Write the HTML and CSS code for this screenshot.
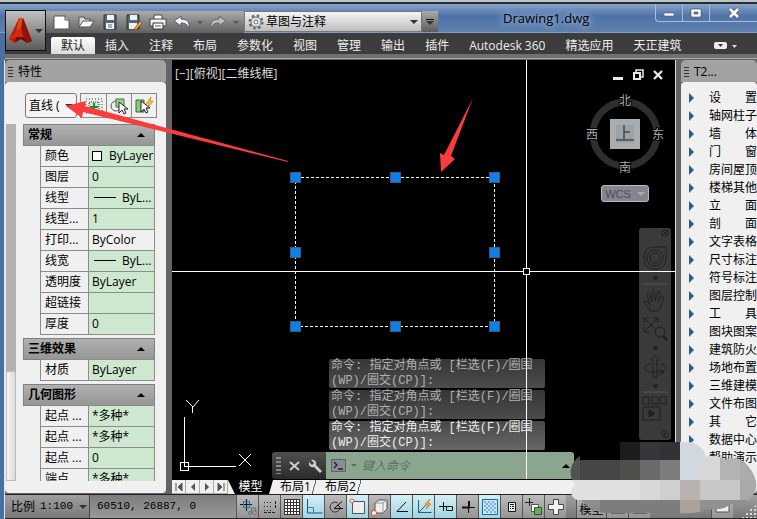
FILE: index.html
```html
<!DOCTYPE html>
<html lang="zh-CN">
<head>
<meta charset="utf-8">
<title>Drawing1.dwg</title>
<link rel="stylesheet" href="styles.css">
</head>
<body>
<div class="app">
  <header class="top">
    <button class="app-btn" aria-label="Application menu">
      <svg width="24" height="28" viewBox="0 0 24 28"><path d="M10 1h4l9 23-5 2-6-4-6 4-6-4z" fill="#b81d0b"/><path d="M10 1h4l2 6-4 6-5 2z" fill="#e5451d"/><path d="M7 14l5-3 3 8-5 3-10 0z" fill="#d8260e"/><path d="M14 1l9 23-5 2-4-8-2-7z" fill="#8d1207"/><path d="M7 20h8l3 6-6-4-6 3z" fill="#6a0e08"/></svg>
      <span class="caret"></span>
    </button>
    <div class="top-col">
      <div class="title-row">
        <div class="qat">
          <button aria-label="New"><svg viewBox="0 0 18 16"><path d="M1 2h11l4 4v9H1z" fill="#fff" stroke="#555"/><path d="M12 2v4h4" fill="#ccc" stroke="#555"/></svg></button>
          <button aria-label="Open"><svg viewBox="0 0 18 16"><path d="M2 13V3h5l1 2h5v3" fill="#d5dde2" stroke="#555"/><path d="M2 13l4-6h11l-4 6z" fill="#f4f6f7" stroke="#555"/></svg></button>
          <button aria-label="Save"><svg viewBox="0 0 18 16"><path d="M3 1h12v14H3z" fill="#536779" stroke="#333"/><path d="M6 1h7v5H6zM5 9h8v6H5z" fill="#eef2f4"/><path d="M7 11h4M7 13h4" stroke="#536779"/></svg></button>
          <button aria-label="Save as"><svg viewBox="0 0 18 16"><path d="M2 1h12v14H2z" fill="#536779" stroke="#333"/><path d="M5 1h7v5H5zM4 9h8v6H4z" fill="#eef2f4"/><path d="M9 15l6-8 2 2-6 7z" fill="#f3a62b" stroke="#6b4310" stroke-width=".6"/></svg></button>
          <button aria-label="Print"><svg viewBox="0 0 18 16"><path d="M5 1h8v5H5z" fill="#fff" stroke="#444"/><path d="M1 5h16v7H1z" fill="#f2f2f2" stroke="#444"/><path d="M4 9h10v6H4z" fill="#fff" stroke="#333"/><path d="M6 12h6" stroke="#555"/></svg></button>
          <button aria-label="Undo"><svg viewBox="0 0 18 16"><path d="M1 7l7-5v3c6 0 9 3 8 9-2-4-4-5-8-5v3z" fill="#f7f7f7" stroke="#4c5a66"/></svg></button>
          <span class="caret caret-dim"></span>
          <button aria-label="Redo"><svg viewBox="0 0 18 16"><path d="M17 7l-7-5v3C4 5 1 8 2 14c2-4 4-5 8-5v3z" fill="#bbb" stroke="#666"/></svg></button>
          <span class="caret caret-dim"></span>
        </div>
        <div class="workspace">
          <svg width="16" height="16" viewBox="0 0 16 16"><circle cx="8" cy="8" r="6.500" fill="none" stroke="#5c6368" stroke-width="2" stroke-dasharray="2.500 2.600"/><circle cx="8" cy="8" r="5" fill="#e8ecee" stroke="#5c6368"/><circle cx="8" cy="8" r="2" fill="#fff" stroke="#5c6368"/></svg>
          <select aria-label="工作空间"><option>草图与注释</option></select>
          <span class="caret"></span>
        </div>
        <button class="qat-more" aria-label="Customize"><i></i><span class="caret"></span></button>
        <h1>Drawing1.dwg</h1>
        <div class="win-btns">
          <button aria-label="Minimize"><svg viewBox="0 0 12 12"><path d="M1 6h10v3H1z" fill="#fff" stroke="#555" stroke-width=".6"/></svg></button>
          <button aria-label="Maximize"><svg viewBox="0 0 12 12"><path d="M1 2h10v8H1zM4 5v2h4V5z" fill="#fff" fill-rule="evenodd" stroke="#444" stroke-width=".6"/></svg></button>
          <button aria-label="Close"><svg viewBox="0 0 12 12"><path d="M2 2l8 8M10 2l-8 8" stroke="#556" stroke-width="4"/><path d="M2 2l8 8M10 2l-8 8" stroke="#fff" stroke-width="2.600"/></svg></button>
        </div>
      </div>
      <nav class="menu">
        <button class="on">默认</button><button>插入</button><button>注释</button><button>布局</button><button>参数化</button><button>视图</button><button>管理</button><button>输出</button><button>插件</button><button>Autodesk 360</button><button>精选应用</button><button>天正建筑</button>
        <button class="ribbon-toggle" aria-label="Ribbon"><svg width="24" height="10" viewBox="0 0 24 10"><rect x="1" y="1" width="13" height="7" rx="2" fill="#eee"/><path d="M5 3h5L7.500 6z" fill="#333"/><path d="M19 4h5l-2.500 3z" fill="#ddd"/></svg></button>
      </nav>
    </div>
  </header>

  <main class="work">
    <aside class="palette props">
      <h2><i class="grip"></i>特性</h2>
      <div class="palette-body">
        <div class="pick">
          <div class="kind"><select aria-label="对象类型"><option>直线 (</option></select><span class="caret"></span></div>
          <div class="pick-btns">
            <button aria-label="PICKADD"><svg viewBox="0 0 22 20"><rect x="3" y="3" width="16" height="14" fill="none" stroke="#333" stroke-dasharray="1 2"/><rect x="6" y="6" width="10" height="9" fill="#cfe9cf" stroke="#333" stroke-dasharray="1 1"/><path d="M11 7v7M7 11h8" stroke="#16902a" stroke-width="2"/></svg></button>
            <button aria-label="选择对象"><svg viewBox="0 0 22 20"><circle cx="8" cy="10" r="5" fill="none" stroke="#555"/><path d="M8 3h8v8H8z" fill="#9ad08f" stroke="#3a7d33"/><path d="M11 6v11l3-3 2 4 2-1-2-4h4z" fill="#fff" stroke="#222"/></svg></button>
            <button aria-label="快速选择"><svg viewBox="0 0 22 20"><path d="M3 4h8v12H3z" fill="#8cc97e" stroke="#2e6e27"/><path d="M18 1l-5 7h3l-2 5 6-8h-3z" fill="#ffc02e" stroke="#c67a08" stroke-width=".6"/><path d="M8 5v11l3-3 2 4 2-1-2-4h4z" fill="#fff" stroke="#222"/></svg></button>
          </div>
        </div>
        <div class="prop-scroll">
          <div class="track"><i></i></div>
          <div class="groups">
            <section><h3>常规<span class="up"></span></h3>
            <table>
              <tr><th>颜色</th><td><i class="swatch"></i>ByLayer</td></tr>
              <tr><th>图层</th><td>0</td></tr>
              <tr><th>线型</th><td><i class="line"></i>ByL...</td></tr>
              <tr><th>线型...</th><td>1</td></tr>
              <tr><th>打印...</th><td class="plain">ByColor</td></tr>
              <tr><th>线宽</th><td><i class="line"></i>ByL...</td></tr>
              <tr><th>透明度</th><td>ByLayer</td></tr>
              <tr><th>超链接</th><td></td></tr>
              <tr><th>厚度</th><td>0</td></tr>
            </table></section>
            <section><h3>三维效果<span class="up"></span></h3>
            <table><tr><th>材质</th><td>ByLayer</td></tr></table></section>
            <section><h3>几何图形<span class="up"></span></h3>
            <table>
              <tr><th>起点 ...</th><td>*多种*</td></tr>
              <tr><th>起点 ...</th><td>*多种*</td></tr>
              <tr><th>起点 ...</th><td>0</td></tr>
              <tr><th>端点 ...</th><td>*多种*</td></tr>
            </table></section>
          </div>
        </div>
      </div>
    </aside>

    <section class="doc">
      <div class="view">
        <span class="view-label">[−][俯视][二维线框]</span>
        <div class="view-btns">
          <button aria-label="Minimize view"><svg viewBox="0 0 12 12"><path d="M1 8h10v3H1z" fill="#e8e8e8"/></svg></button>
          <button aria-label="Restore view"><svg viewBox="0 0 12 12"><path d="M4 3V1h7v7H9" fill="none" stroke="#e8e8e8" stroke-width="1.500"/><path d="M2 4h6v6H2z" fill="none" stroke="#e8e8e8" stroke-width="2"/></svg></button>
          <button aria-label="Close view"><svg viewBox="0 0 12 12"><path d="M2 2l8 8M10 2l-8 8" stroke="#e8e8e8" stroke-width="2.400"/></svg></button>
        </div>
        <svg class="cube" width="82" height="84" viewBox="0 0 82 84">
          <circle cx="41" cy="43" r="32" fill="none" stroke="#2e2e2e" stroke-width="7"/>
          <rect x="26" y="28" width="30" height="30" fill="#a9adb0"/><rect x="32" y="34" width="18" height="18" fill="#9ba3a8"/>
          <path d="M40 34v15M40 41h6M32 49h18" stroke="#434a50" stroke-width="1.500" fill="none"/>
          <g fill="#aaa" stroke="#000" stroke-width="2" paint-order="stroke" font-size="12" text-anchor="middle"><text x="41" y="14">北</text><text x="8" y="48">西</text><text x="74" y="48">东</text><text x="41" y="81">南</text></g>
        </svg>
        <button class="wcs">WCS<span class="caret"></span></button>
        <div class="navbar">
          <svg width="32" height="212" viewBox="0 0 32 212" fill="none" stroke="#202020">
            <circle cx="26" cy="5" r="3.500"/><path d="M24 3l4 4M28 3l-4 4"/>
            <path d="M5 30C5 22 9 19 16 19h11v11c0 7-4 11-11 11S5 37 5 30z"/><circle cx="16" cy="30" r="8"/><circle cx="16" cy="30" r="5"/>
            <path d="M14 49h5l-2.500 3z" fill="#202020"/><path d="M4 56h24" stroke="#555"/>
            <path d="M11 83c-1-4-4-6-6-9 2-2 3 0 6 3l-3-11c2-2 3 0 5 8l0-12c2-2 3 0 3 11l3-10c2-1 3 1 0 11l4-6c3 0 1 4-1 9-1 4-3 6-4 6z"/>
            <path d="M5 90l15 15M19 90L5 104M5 95v-5h5M14 90h5v5M5 99v5h5"/><circle cx="21" cy="104" r="5" fill="#3a3a3a"/><path d="M24 108l4 4" stroke-width="3"/>
            <path d="M14 119h5l-2.500 3z" fill="#202020"/>
            <path d="M16 127l4 5h-2v17h-4v-17h-2z"/><path d="M12 136c-9 1-9 7 0 8h8c9-1 9-7 2-8M20 141l5 3-5 3"/>
            <path d="M14 157h5l-2.500 3z" fill="#202020"/><path d="M4 164h24" stroke="#555"/>
            <path d="M4 169h6v7H4zM13 169h6v7h-6zM21 169h6v7h-6zM4 179h17v13H4z"/><path d="M10 182l6 3.500-6 3.500z" fill="#202020"/>
            <circle cx="26" cy="206" r="3.500"/><circle cx="26" cy="206" r="1"/>
          </svg>
        </div>
        <form class="command">
          <div class="cmd-tools"><i class="grip"></i><button type="button" aria-label="Close"><svg viewBox="0 0 14 14"><path d="M2 3l9 8M11 3l-9 8" stroke="#ccc" stroke-width="2"/></svg></button><button type="button" aria-label="Settings"><svg viewBox="0 0 14 14"><path d="M2 1l3 3-2 2-3-3c-1 4 2 6 5 5l6 6 2-2-6-6c1-4-2-6-5-5z" fill="#ccc"/></svg></button></div>
          <div class="cmd-entry"><svg width="15" height="13" viewBox="0 0 15 13"><rect x=".5" y=".5" width="14" height="12" fill="#8c8c95" stroke="#62626b"/><path d="M3 3l3 3-3 3M7 10h5" stroke="#222" fill="none" stroke-width="1.300"/></svg><span class="caret"></span><input aria-label="命令" placeholder="键入命令"><span class="up"></span></div>
        </form>
        <ol class="history">
          <li>命令: 指定对角点或 [栏选(F)/圈围<br>(WP)/圈交(CP)]:</li>
          <li>命令: 指定对角点或 [栏选(F)/圈围<br>(WP)/圈交(CP)]:</li>
          <li>命令: 指定对角点或 [栏选(F)/圈围<br>(WP)/圈交(CP)]:</li>
        </ol>
        <svg class="drawing" fill="none" stroke="#fff" shape-rendering="crispEdges">
          <path d="M0 211.500h351M358 211.500h146M354.500 0v208M354.500 215v204"/><rect x="351.500" y="208.500" width="6" height="6"/>
          <rect x="123.500" y="117.500" width="199" height="149" stroke-dasharray="3 2"/>
          <path d="M12.500 357v49h51M8.500 402.500h8v8h-8z"/>
          <path d="M14 340l7 7 6-7M20.500 347v6M67 394l12 12M79 394l-12 12" shape-rendering="auto"/>
          <g fill="#0c80e8" stroke="#3c5a80"><path d="M118.500 112.500h10v10h-10zM218.500 112.500h10v10h-10zM317.500 112.500h10v10h-10zM118.500 187.500h10v10h-10zM317.500 187.500h10v10h-10zM118.500 261.500h10v10h-10zM218.500 261.500h10v10h-10zM317.500 261.500h10v10h-10z"/></g>
        </svg>
      </div>
      <div class="sheets">
        <button class="step" aria-label="First"><svg viewBox="0 0 10 10"><path d="M2 1v8M8 1L4 5l4 4z" fill="#555" stroke="#555"/></svg></button><button class="step" aria-label="Previous"><svg viewBox="0 0 10 10"><path d="M7 1L3 5l4 4z" fill="#555"/></svg></button><button class="step" aria-label="Next"><svg viewBox="0 0 10 10"><path d="M3 1l4 4-4 4z" fill="#555"/></svg></button><button class="step" aria-label="Last"><svg viewBox="0 0 10 10"><path d="M8 1v8M2 1l4 4-4 4z" fill="#555" stroke="#555"/></svg></button>
        <button class="sheet on">模型</button><button class="sheet">布局1</button><button class="sheet">布局2</button>
      </div>
    </section>

    <aside class="palette tarch">
      <h2><i class="grip"></i>T2...</h2>
      <ul class="palette-body">
        <li>设　　置</li><li>轴网柱子</li><li>墙　　体</li><li>门　　窗</li><li>房间屋顶</li><li>楼梯其他</li><li>立　　面</li><li>剖　　面</li><li>文字表格</li><li>尺寸标注</li><li>符号标注</li><li>图层控制</li><li>工　　具</li><li>图块图案</li><li>建筑防火</li><li>场地布置</li><li>三维建模</li><li>文件布图</li><li>其　　它</li><li>数据中心</li><li>帮助演示</li>
      </ul>
    </aside>
  </main>

  <footer class="status">
    <div class="scale"><label for="scale">比例</label><select id="scale"><option>1:100</option></select><span class="caret"></span></div>
    <output class="coords">60510, 26887, 0</output>
    <div class="toggles">
      <button aria-label="推断约束"><svg viewBox="0 0 20 20"><path d="M2 7.500h12M8.500 2v12" stroke="#111"/><path d="M5.500 4.500h6v6h-6z" fill="none" stroke="#2b6ba0"/><path d="M13.500 16v-5h4v4" stroke="#357dbb" fill="none"/><circle cx="12" cy="16" r="1.500" stroke="#357dbb" fill="none"/><circle cx="16.500" cy="15.500" r="2" stroke="#d2542c" fill="none"/></svg></button>
      <button aria-label="捕捉"><svg viewBox="0 0 20 20"><path d="M4 5.500h9M4 9.500h9M4 13.500h9" stroke="#222" stroke-dasharray="1 2"/><path d="M15.500 4v8M4 15.500h12" stroke="#222" stroke-dasharray="3 1"/></svg></button>
      <button aria-label="栅格"><svg viewBox="0 0 20 20"><path d="M2 2h16v16H2z" fill="#fff"/><path d="M2.500 2v16M5.500 2v16M8.500 2v16M11.500 2v16M14.500 2v16M17.500 2v16M2 2.500h16M2 5.500h16M2 8.500h16M2 11.500h16M2 14.500h16M2 17.500h16" stroke="#333"/></svg></button>
      <button class="on" aria-label="正交"><svg viewBox="0 0 20 20"><path d="M3.500 2v14h15" fill="none" stroke="#135b7e"/><path d="M3 10.500h6.500V16" fill="none" stroke="#397e9b"/></svg></button>
      <button aria-label="极轴"><svg viewBox="0 0 20 20"><path d="M12 6a5 5 0 1 0 2 5" fill="none" stroke="#333"/><path d="M8 11.500l8-7M8 11.500h9M12 8l3 3.500" fill="none" stroke="#111"/></svg></button>
      <button class="on" aria-label="对象捕捉"><svg viewBox="0 0 20 20"><path d="M4.500 4.500h12v12h-12z" fill="#eee" stroke="#555"/><circle cx="4" cy="4" r="2" fill="#fff" stroke="#c95b32"/></svg></button>
      <button aria-label="三维对象捕捉"><svg viewBox="0 0 20 20"><path d="M5 6l4-3h8v9l-4 4H5z" fill="#eee" stroke="#555"/><path d="M5 6h8v10M13 6l4-3" fill="none" stroke="#999"/><circle cx="4" cy="16" r="2.500" fill="#fff" stroke="#d35426"/></svg></button>
      <button class="on" aria-label="对象追踪"><svg viewBox="0 0 20 20"><path d="M14 5L5 14.500h11" fill="none" stroke="#111"/></svg></button>
      <button class="on" aria-label="动态 UCS"><svg viewBox="0 0 20 20"><path d="M4.500 3v12.500h13M4 16l8-8" fill="none" stroke="#315d72"/><path d="M16 2l-5 5 3 1-2 4 5-5-3-1z" fill="#ffad22" stroke="#b35a0b" stroke-width=".5"/></svg></button>
      <button class="on" aria-label="动态输入"><svg viewBox="0 0 20 20"><path d="M3 9.500h13M7.500 5v9M10.500 9.500h6v4h-6z" fill="none" stroke="#111"/></svg></button>
      <button aria-label="线宽"><svg viewBox="0 0 20 20"><path d="M11 10.500h6M10.500 10v6" stroke="#111"/><path d="M11 4v7M4 10.500h8" stroke="#111" stroke-width="2"/></svg></button>
      <button class="on" aria-label="透明度"><svg viewBox="0 0 20 20"><path d="M2.500 2.500h15v15h-15z" fill="#cde5f6" stroke="#1769a8"/><path d="M4 5h12M4 9h12M4 13h12" stroke="#7ab0dc" stroke-width="2" stroke-dasharray="2 2"/><path d="M6 7h10M6 11h10M6 15h10" stroke="#7ab0dc" stroke-width="2" stroke-dasharray="2 2"/></svg></button>
      <button aria-label="快捷特性"><svg viewBox="0 0 20 20"><path d="M6.500 5.500h7v9h-7z" fill="#eee" stroke="#111"/><path d="M8 7.500h4M8 9.500h1M10 9.500h2M8 11.500h1M10 11.500h2" stroke="#111"/></svg></button>
      <button aria-label="选择循环"><svg viewBox="0 0 20 20"><path d="M1 5.500h8M5.500 1v8" stroke="#222"/><path d="M7.500 7.500h7v7h-7z" fill="#fff" stroke="#555"/><path d="M10.500 10.500h7v7h-7z" fill="#6aa95b" stroke="#2a5a22"/></svg></button>
      <button aria-label="注释监视器"><svg viewBox="0 0 20 20"><path d="M7.500 2.500h5v5h5v5h-5v5h-5v-5h-5v-5h5z" fill="#f3f3f3" stroke="#445"/></svg></button>
    </div>
    <div class="space"><button>模型</button><button aria-label="快速查看布局"><svg viewBox="0 0 20 20"><path d="M3 4h14v12H3z" fill="#ddd" stroke="#333"/></svg></button><button aria-label="快速查看图形"><svg viewBox="0 0 20 20"><path d="M3 4h14v12H3z" fill="#ddd" stroke="#333"/></svg></button></div>
    <button class="clean" aria-label="全屏显示"><svg viewBox="0 0 20 20"><path d="M3 3h13v12H3z" fill="#eee" stroke="#555"/></svg></button>
    <i class="resize"></i>
  </footer>

  <svg class="markup" width="757" height="519" viewBox="0 0 757 519">
    <defs><clipPath id="cloud"><path d="M620 442h66c11 0 18 6 20 15 8-3 16 0 19 3 7-4 17-2 23 6 11 13 11 26 0 34-6 4-13 5-18 4-4 5-14 6-22 5-8 4-20 5-36 4h-63c-12 0-22-5-28-13-11 1-12-11-6-15-7-8-6-22 5-29h40z"/></clipPath></defs>
    <g clip-path="url(#cloud)" shape-rendering="crispEdges">
      <path fill="#1c1b1e" d="M620 442h20v18h-20z"/><path fill="#38363a" d="M640 442h20v18h-20z"/><path fill="#343236" d="M660 442h20v18h-20z"/><path fill="#d2d9de" d="M680 442h40v38h-40z"/>
      <path fill="#505450" d="M560 450h20v30h-20z"/><path fill="#464646" d="M580 460h40v20h-40z"/><path fill="#504f4c" d="M620 460h20v20h-20z"/><path fill="#6c6a6b" d="M640 460h20v20h-20z"/><path fill="#7d7b7c" d="M660 460h20v20h-20z"/><path fill="#d7d7d7" d="M700 457h20v23h-20z"/><path fill="#b5b2b2" d="M720 450h20v30h-20z"/><path fill="#acaaab" d="M740 450h20v30h-20z"/>
      <path fill="#e0e0e0" d="M560 480h80v20h-80z"/><path fill="#d8d8d8" d="M640 480h20v20h-20z"/><path fill="#cfcfcf" d="M660 480h20v20h-20z"/><path fill="#b8b2b0" d="M680 480h20v20h-20z"/><path fill="#c8c8c8" d="M700 480h40v20h-40z"/><path fill="#a9a9a9" d="M740 480h20v20h-20z"/>
      <path fill="#8d8d8d" d="M560 500h40v15h-40z"/><path fill="#7d7d7d" d="M600 500h80v15h-80z"/><path fill="#aaa298" d="M680 500h20v15h-20z"/><path fill="#909090" d="M700 500h60v15h-60z"/>
    </g>
    <path d="M66 106l20-5-1 5 203 55v1L83 112l-1 6zM473 98l-22 58 4 3-14 13-1-19 4 2z" fill="#fa3c3c"/>
  </svg>
</div>
</body>
</html>
```

FILE: styles.css
```css
* { box-sizing: border-box; }
body {
  margin: 0;
  font: 12px/16px "Open Sans", "Noto Sans CJK SC", sans-serif;
  color: #000;
}
button, select, input { font: inherit; color: inherit; border: 0; padding: 0; margin: 0; background: none; border-radius: 0; }
select { appearance: none; }
h1, h2, h3, ul, ol { margin: 0; padding: 0; font-size: 12px; font-weight: 400; list-style: none; }
button { display: flex; align-items: center; justify-content: center; white-space: nowrap; }
button svg { flex: none; }

.app {
  position: relative;
  display: flex;
  flex-direction: column;
  height: 100vh;
  overflow: hidden;
  padding-left: 5px;
  background: linear-gradient(90deg, #4a6fa3 4px, #dce6f2 4px, #dce6f2 5px, #646464 5px);
}
.caret { flex: none; border: 4px solid transparent; border-top-color: #333; border-bottom: 0; }
.caret-dim { border-width: 3px; border-bottom: 0; border-top-color: #555; }
.up { flex: none; border: 4px solid transparent; border-bottom-color: #000; border-top: 0; }
.grip { width: 5px; height: 11px; background: repeating-linear-gradient(#333 0 1px, transparent 1px 3px); flex: none; }

.top {
  display: flex;
  height: 60px;
  flex: none;
  margin-left: -5px;
  padding-left: 5px;
  background: linear-gradient(#b9c4c4 2px, #282c30 2px, #282c30 4px, #87a3c9 4px, #4f73a8 16px, #5e80ae 32px, #a6b8d2 33px, transparent 33px), linear-gradient(90deg, #4a6fa3 5px, transparent 5px), linear-gradient(#3c3c3c 54px, #707070 54px, #707070 58px, #aaa 58px, #aaa 59px, #646464 59px);
}
.app-btn {
  width: 41px; height: 41px; margin-top: 10px; gap: 2px; flex: none;
  border: 1px solid #111;
  background: linear-gradient(#c2c2c2, #5b5b5b);
}
.top-col { flex: 1; display: flex; flex-direction: column; min-width: 0; }
.title-row { display: flex; height: 33px; flex: none; padding-top: 11px; position: relative; }
.qat {
  width: 198px; height: 22px; flex: none; display: flex; align-items: center; gap: 6px; padding-left: 7px;
  background: linear-gradient(#ababab, #606060);
}
.qat button, .qat svg { width: 18px; height: 16px; }
.workspace {
  flex: none; width: 178px; height: 21px; display: flex; align-items: center; padding: 0 3px;
  background: linear-gradient(#f4f4f4, #bdbdbd); border: 1px solid #777;
}
.workspace select { flex: 1; padding-left: 2px; height: 18px; }
.qat-more { width: 16px; height: 21px; flex: none; flex-direction: column; gap: 1px; background: linear-gradient(#a9a9a9, #5d5d5d); }
.qat-more i { width: 8px; height: 1px; background: #111; }
.title-row h1 { margin-left: 65px; line-height: 14px; font-size: 13px; text-shadow: 0 0 6px #a9bfdf, 0 0 8px #a9bfdf; }
.win-btns { position: absolute; top: 4px; right: 0; display: flex; width: 102px; height: 18px; border: 1px solid #a9bdd8; border-top: 0; border-right: 0; border-radius: 0 0 0 4px; }
.win-btns button { width: 27px; border-right: 1px solid #a9bdd8; }
.win-btns button:last-child { flex: 1; border: 0; }
.win-btns svg { width: 12px; height: 12px; }

.menu { display: flex; height: 21px; padding: 4px 0 0 5px; color: #eee; }
.menu button { padding: 0 10px; height: 17px; }
.menu .on { border-radius: 2px 2px 0 0; background: linear-gradient(#fff, #dcdcdc); color: #222; }
.menu .ribbon-toggle { padding-left: 22px; }

.work { flex: 1; min-height: 0; display: flex; }
.palette { display: flex; flex-direction: column; flex: none; margin-bottom: 1px; }
.palette h2 { display: flex; align-items: center; gap: 5px; height: 22px; padding: 2px 3px 0; background: #a2a2a2; border-radius: 5px 5px 0 0; flex: none; }
.palette .palette-body { flex: 1; min-height: 0; background: #f0f0f0; border-radius: 4px; }
.props { width: 161px; margin-right: 6px; }
.props .palette-body { display: flex; flex-direction: column; padding-bottom: 12px; }
.pick { display: flex; align-items: center; gap: 3px; padding: 11px 9px 6px 20px; flex: none; }
.kind { width: 53px; height: 25px; display: flex; align-items: center; border: 1px solid #777; border-radius: 3px; padding-right: 3px; background: #f4f4f4; }
.kind select { flex: 1; min-width: 0; padding-left: 3px; }
.pick-btns { display: flex; border: 1px solid #888; }
.pick-btns button { width: 25px; height: 23px; border-left: 1px solid #888; }
.pick-btns button:first-child { border: 0; }
.pick-btns svg { width: 22px; height: 20px; }
.prop-scroll { flex: 1; min-height: 0; overflow: hidden; display: flex; }
.track { width: 10px; margin: 0 7px 0 1px; background: #b2b2b2; display: flex; flex-direction: column; justify-content: flex-end; }
.track i { height: 110px; background: linear-gradient(90deg, #f6f6f6, #d8dad8); border: 1px solid #bbb; border-radius: 2px; }
.groups { width: 132px; display: flex; flex-direction: column; gap: 3px; }
.groups h3 { height: 22px; display: flex; align-items: center; justify-content: space-between; padding: 0 9px 0 4px; font-weight: 700; background: linear-gradient(#b0b0b0, #969696); border: 1px solid #808080; }
table { border-collapse: collapse; table-layout: fixed; width: 115px; margin: -1px 0 0 17px; }
th, td { height: 21px; padding: 0 0 0 4px; border: 1px solid #8c8c8c; font-weight: 400; text-align: left; white-space: nowrap; overflow: hidden; }
th { width: 48px; background: #f0f0f0; }
td { padding-left: 3px; background: #cde8ce; }
td.plain { background: #f0f0f0; }
.swatch { display: inline-block; width: 10px; height: 10px; margin-right: 7px; background: #fff; border: 1px solid #000; vertical-align: -1px; }
.line { display: inline-block; width: 22px; height: 1px; margin: 0 6px 0 2px; background: #000; vertical-align: 4px; }

.doc { flex: 1; min-width: 0; display: flex; flex-direction: column; }
.view { position: relative; flex: 1; min-height: 0; background: #000; border-right: 1px solid #ddd; overflow: hidden; }
.drawing { position: absolute; inset: 0; width: 100%; height: 100%; pointer-events: none; }
.view-label { position: absolute; left: 3px; top: 6px; color: #ddd; }
.view-btns { position: absolute; right: 11px; top: 9px; display: flex; gap: 8px; }
.view-btns svg { width: 12px; height: 12px; display: block; }
.cube { position: absolute; right: 9px; top: 31px; }
.wcs { position: absolute; right: 26px; top: 125px; width: 48px; height: 17px; gap: 6px; border: 1px solid #bbbbc4; border-radius: 3px; background: #85858f; color: #4b4b55; font: 11px/14px "Liberation Sans", sans-serif; }
.wcs .caret { border-top-color: #aaa; }
.navbar { position: absolute; right: 4px; top: 168px; border-radius: 3px; background: #3a3a3a; }
.navbar svg { display: block; }
.history { position: absolute; left: 157px; bottom: 30px; width: 216px; display: flex; flex-direction: column; gap: 2px; font: 12px/15px "Liberation Mono", "Noto Sans CJK SC", monospace; color: #b0b0b0; }
.history li { height: 29px; padding-left: 2px; border-radius: 2px; background: linear-gradient(#363636, #4c4c4c); white-space: nowrap; }
.history li:last-child { color: #eee; background: linear-gradient(#484848, #686868); }
.command { position: absolute; left: 100px; bottom: 1px; width: 302px; height: 27px; display: flex; border-radius: 3px; overflow: hidden; }
.cmd-tools { width: 54px; display: flex; align-items: center; gap: 7px; padding-left: 4px; background: linear-gradient(#505050, #2a2a2a); }
.cmd-tools .grip { height: 17px; background: repeating-linear-gradient(#888 0 2px, transparent 2px 4px); }
.cmd-tools svg { width: 14px; height: 14px; }
.cmd-entry { flex: 1; display: flex; align-items: center; gap: 5px; padding: 0 4px 0 5px; background: #8ca58e; }
.cmd-entry .caret { border-width: 3px; border-bottom: 0; border-top-color: #5c6d5e; }
.cmd-entry input { flex: 1; min-width: 0; font-style: italic; }
.cmd-entry input::placeholder { color: #5f7061; }
.sheets { display: flex; height: 14px; flex: none; background: #f0f0f0; }
.step { width: 14px; border: 1px solid #aaa; border-width: 0 1px 1px 0; }
.step svg { width: 10px; height: 10px; }
.sheet { width: 45px; line-height: 14px; background: linear-gradient(105deg, transparent 41px, #666 41px, #666 42px, transparent 42px); }
.sheet.on { background: #000; color: #fff; clip-path: polygon(0 0, 100% 0, calc(100% - 4px) 100%, 7px 100%); }

.tarch { width: 76px; margin-left: 5px; }
.tarch .palette-body { padding: 7px 0 0 8px; overflow: hidden; }
.tarch li { display: flex; align-items: center; gap: 15px; height: 18px; white-space: nowrap; }
.tarch li::before { content: ""; flex: none; border: 5px solid transparent; border-left-color: #2d5c84; border-right: 0; }

.status { display: flex; height: 25px; flex: none; border: solid #222; border-width: 1px 0 1px; background: linear-gradient(#a0a0a0, #777); }
.scale { width: 85px; display: flex; align-items: center; gap: 5px; padding-left: 6px; border-right: 1px solid #444; white-space: nowrap; }
.scale select, .coords { font: 11px/23px "Liberation Mono", monospace; }
.scale select { width: 34px; }
.coords { width: 146px; padding-left: 7px; background: linear-gradient(#7c7c7c, #999); }
.toggles { display: flex; }
.toggles button, .space button, .clean { width: 22px; border-left: 1px solid #555; background: linear-gradient(#bcbcbc, #949494); }
.toggles .on { background: linear-gradient(#d6eef4, #9fd5e3); }
.status svg { width: 20px; height: 20px; }
.space { display: flex; margin-left: 10px; }
.space button:first-child { width: 30px; align-items: flex-end; }
.clean { margin-left: auto; }
.resize { width: 24px; height: 14px; align-self: flex-end; background: radial-gradient(circle, #ddd 1px, transparent 1px) 0 0 / 4px 4px; clip-path: polygon(100% 0, 100% 100%, 30% 100%); }
.markup { position: absolute; left: 0; top: 0; pointer-events: none; }
```
